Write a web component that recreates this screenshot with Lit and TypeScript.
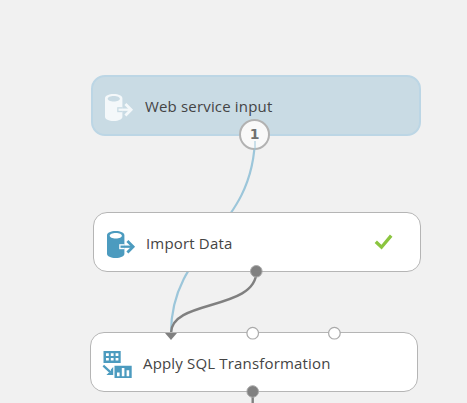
import { LitElement, html, svg, css } from "lit";
import { customElement, property } from "lit/decorators.js";

const database = svg`
  <path fill="currentColor" fill-rule="evenodd" d="M0 4.300C0 1.700 3.800 0 8.700 0s8.700 1.700 8.700 4.300v18.400c0 2.500-3.800 4.300-8.700 4.300S0 25.200 0 22.700zM2.700 4.700c0 1.600 2.600 2.800 6.100 2.800s6.100-1.200 6.100-2.800-2.600-2.800-6.100-2.800-6.100 1.200-6.100 2.800z"/>
  <path fill="var(--node-fill)" d="M12.200 13.200h5.400v5h-5.400z"/>
  <path fill="none" stroke="currentColor" stroke-width="2.300" d="M13.500 15.700h13"/>
  <path fill="none" stroke="currentColor" stroke-width="2.800" d="M20.400 10l5.700 5.700-5.700 5.700"/>`;

const transform = svg`
  <path fill="currentColor" fill-rule="evenodd" d="M.5 0h17.200v12H.5zM3 2.300v2.600h2.800V2.300zm4.800 0v2.600h2.800V2.300zm4.800 0v2.600h2.800V2.300zM3 7v2.600h2.800V7zm4.800 0v2.600h2.800V7zm4.800 0v2.600h2.800V7z"/>
  <path fill="none" stroke="currentColor" stroke-width="2.200" d="M.3 14.600l7.600 7"/>
  <path fill="currentColor" d="M10.200 16v8H3.400l2.300-2.300h1.800l.4-.3v-3z"/>
  <path fill="currentColor" fill-rule="evenodd" d="M11.500 14.800h17.200V27H11.500zM14 21.500v3.800h2.600v-3.800zm4.800-4.500v8.300h2.600V17zm4.800 2.200v6.100h2.600v-6.100z"/>`;

@customElement("flow-node")
class FlowNode extends LitElement {
  @property() label = "";
  @property() icon = "database";
  @property({ type: Boolean }) done = false;

  static styles = css`
    :host {
      --node-fill: #fff;
      box-sizing: border-box;
      display: flex;
      align-items: center;
      height: 60px;
      width: 328px;
      padding: 1px 26px 0 12px;
      background: var(--node-fill);
      border: 1.5px solid #b5b5b5;
      border-radius: 14px;
      color: #4c9bbf;
    }
    .icon { flex: none; width: 30px; height: 28px; margin-top: 4px; overflow: visible; }
    .label {
      flex: 1;
      margin-left: var(--label-gap, 10px);
      color: #444;
      font: 15px/22px "Open Sans", "Noto Sans", sans-serif;
      letter-spacing: 0.17px;
      white-space: nowrap;
    }
    .check { width: 20px; height: 18px; margin-top: -2px; }
  `;

  render() {
    return html`
      <svg class="icon" viewBox="0 0 30 28">${this.icon === "database" ? database : transform}</svg>
      <span class="label">${this.label}</span>
      ${this.done
        ? html`<svg class="check" viewBox="0 0 20 18"><path d="M1.800 8.700l5.700 5.500L17.200 2.600" fill="none" stroke="#8bc53f" stroke-width="3.300"/></svg>`
        : null}
    `;
  }
}

@customElement("app-root")
class AppRoot extends LitElement {
  static styles = css`
    :host {
      display: block;
      position: relative;
      width: 467px;
      height: 403px;
      overflow: hidden;
      background: #f1f1f1;
    }
    .layer { position: absolute; left: 0; top: 0; }
    flow-node { position: absolute; }
    .input {
      left: 91px; top: 75px; width: 330px; height: 61px;
      --node-fill: #c9dbe4;
      border: 2px solid #bcd6e5;
      color: #f4f8fa;
    }
    .import { left: 93px; top: 212px; padding-left: 13px; --label-gap: 9px; }
    .sql { left: 90px; top: 332px; }
    .badge {
      position: absolute;
      left: 239px; top: 119px;
      box-sizing: border-box;
      width: 31px; height: 31px;
      border: 2.500px solid #b2b2b2;
      border-radius: 50%;
      background: #f9f9f9;
      color: #707070;
      font: bold 14px/27px "DejaVu Sans", sans-serif;
      text-align: center;
    }
  `;

  render() {
    return html`
      <svg class="layer" width="467" height="403">
        <path d="M255 135C255 232 171 244 171 333" fill="none" stroke="#9cc6da" stroke-width="2.200"/>
        <path d="M256.500 271C256.500 311 171 299 171 333" fill="none" stroke="#808080" stroke-width="2.400"/>
        <path d="M252.700 391v12" stroke="#808080" stroke-width="2.400"/>
      </svg>
      <flow-node class="input" label="Web service input"></flow-node>
      <flow-node class="import" label="Import Data" done></flow-node>
      <flow-node class="sql" label="Apply SQL Transformation" icon="transform"></flow-node>
      <div class="badge">1</div>
      <svg class="layer" width="467" height="403">
        <path d="M255 141v9" stroke="#9cc6da" stroke-width="2" opacity=".5"/>
        <path d="M165 333h12l-6 7z" fill="#808080"/>
        <g fill="#808080" stroke="#aaa">
          <circle cx="256.300" cy="271.300" r="5.800"/>
          <circle cx="252.700" cy="391.500" r="5.800"/>
        </g>
        <g fill="#fff" stroke="#aaa" stroke-width="1.200">
          <circle cx="252.700" cy="333.200" r="5.800"/>
          <circle cx="334.400" cy="333.200" r="5.800"/>
        </g>
      </svg>
    `;
  }
}
